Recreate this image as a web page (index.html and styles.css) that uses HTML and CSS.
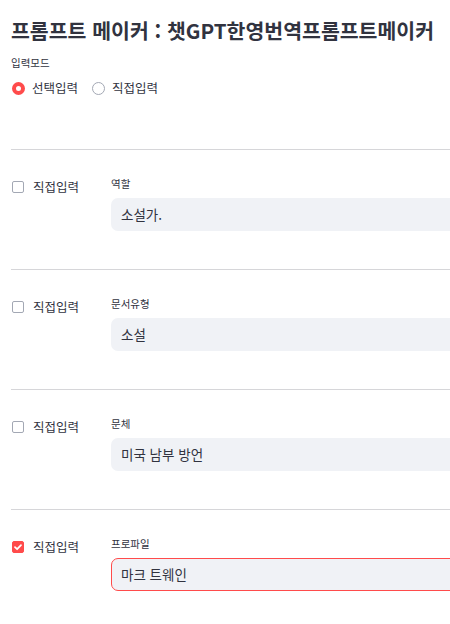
FILE: index.html
```html
<!DOCTYPE html>
<html lang="ko">
<head>
<meta charset="utf-8">
<title>프롬프트 메이커</title>
<link rel="stylesheet" href="styles.css">
</head>
<body>
<div class="page">
  <h1 class="title">프롬프트 메이커 : 챗GPT한영번역프롬프트메이커</h1>
  <div class="field-label">입력모드</div>
  <div class="radios">
    <label class="radio checked"><span class="dot"></span>선택입력</label>
    <label class="radio"><span class="dot"></span>직접입력</label>
  </div>

  <hr class="divider">
  <div class="row">
    <label class="check"><span class="box"></span>직접입력</label>
    <div class="field">
      <div class="field-label">역할</div>
      <div class="input">소설가.</div>
    </div>
  </div>

  <hr class="divider">
  <div class="row">
    <label class="check"><span class="box"></span>직접입력</label>
    <div class="field">
      <div class="field-label">문서유형</div>
      <div class="input">소설</div>
    </div>
  </div>

  <hr class="divider">
  <div class="row">
    <label class="check"><span class="box"></span>직접입력</label>
    <div class="field">
      <div class="field-label">문체</div>
      <div class="input">미국 남부 방언</div>
    </div>
  </div>

  <hr class="divider">
  <div class="row">
    <label class="check checked"><span class="box"><svg viewBox="0 0 12 12" width="12" height="12"><path d="M3 6.2 L5.1 8.2 L9 4.2" fill="none" stroke="#fff" stroke-width="1.8" stroke-linecap="round" stroke-linejoin="round"/></svg></span>직접입력</label>
    <div class="field">
      <div class="field-label">프로파일</div>
      <div class="input focused">마크 트웨인</div>
    </div>
  </div>
</div>
</body>
</html>
```

FILE: styles.css
```css
html, body {
  margin: 0;
  padding: 0;
  background: #ffffff;
  overflow: hidden;
}

body {
  font-family: "Noto Sans CJK KR", "Noto Sans", sans-serif;
  color: #31333f;
}

.page {
  width: 439px;
  padding: 16px 0 0 11px;
  overflow: hidden;
}

.title {
  margin: 0;
  font-size: 20.5px;
  line-height: 28px;
  font-weight: 700;
  letter-spacing: 0;
  white-space: nowrap;
  color: #31333f;
}

.field-label {
  font-size: 10.5px;
  line-height: 14px;
  color: #31333f;
}

.page > .field-label {
  margin-top: 12px;
}

.radios {
  display: flex;
  gap: 13px;
  margin-top: 8px;
  height: 20px;
  align-items: center;
}

.radio {
  display: flex;
  align-items: center;
  gap: 7px;
  font-size: 12.5px;
  line-height: 20px;
}

.radio .dot {
  width: 13px;
  height: 13px;
  box-sizing: border-box;
  border-radius: 50%;
  border: 1px solid #a3a8b4;
  background: #fff;
  margin-left: 1px;
}

.radio.checked .dot {
  border: 4px solid #ff4b4b;
  background: #fff;
}

.divider {
  border: 0;
  height: 1px;
  background: rgba(49, 51, 63, 0.2);
  margin: 51px 0 0 0;
}

.row {
  display: flex;
  padding-top: 27px;
  padding-bottom: 38px;
}

.row + .divider {
  margin-top: 0;
}

.check {
  width: 100px;
  flex: none;
  display: flex;
  align-items: center;
  gap: 9px;
  height: 18px;
  font-size: 12.5px;
  line-height: 18px;
  padding-top: 1px;
}

.check .box {
  width: 12px;
  height: 12px;
  box-sizing: border-box;
  border: 1px solid #a3a8b4;
  border-radius: 2px;
  margin-left: 1px;
  display: flex;
}

.check.checked .box {
  background: #ff4b4b;
  border-color: #ff4b4b;
}

.check.checked .box svg {
  margin: -1px;
}

.field {
  flex: none;
  width: 360px;
}

.field .field-label {
  height: 14px;
}

.input {
  margin-top: 7px;
  height: 33px;
  box-sizing: border-box;
  border: 1px solid transparent;
  border-radius: 7px;
  background: #f0f2f6;
  font-size: 13.5px;
  line-height: 31px;
  padding-left: 9px;
  color: #31333f;
}

.input.focused {
  border-color: #ff4b4b;
}
```
